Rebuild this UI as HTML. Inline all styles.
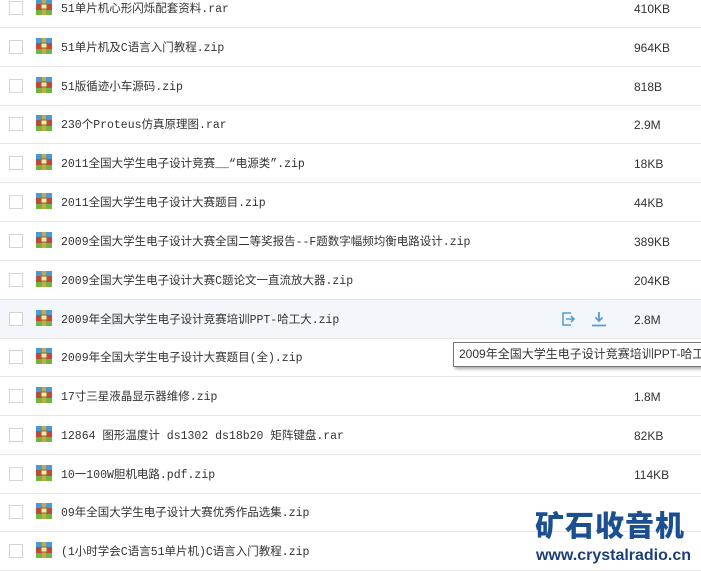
<!DOCTYPE html><html><head><meta charset="utf-8"><style>
body{margin:0;width:701px;height:570px;overflow:hidden;background:#fff;font-family:"Liberation Mono","Noto Sans CJK SC",monospace;font-size:11.5px;color:#333;position:relative}
.r{position:absolute;left:0;width:701px;height:38px;border-bottom:1px solid #e6e6e6}
.cb{position:absolute;left:9px;top:12px;width:12px;height:12px;border:1px solid #d4d4d4;background:#fff}
.ic{position:absolute;left:36px;top:10px;width:16px;height:16px}
.t{position:absolute;left:61px;top:11px;white-space:pre}
.s{position:absolute;left:634px;top:13px;font-family:"Liberation Sans","Noto Sans CJK SC",sans-serif;font-size:12px}
.h{background:#f3f7fb;border-top:1px solid #e0e7ef}
</style></head><body>
<svg width="0" height="0" style="position:absolute"><defs><g id="ic"><rect x="0" y="0" width="16" height="5" fill="#4a9ad8"/><rect x="0" y="5" width="16" height="6" fill="#c0483a"/><rect x="0" y="11" width="16" height="5" fill="#6fb53f"/><rect x="6" y="0" width="4" height="16" fill="#c9a84a"/><rect x="5" y="5" width="6" height="5" fill="#f3e6b0" stroke="#8a6d2b" stroke-width="1"/></g></defs></svg>
<div id="rows"></div>
<script>
const d=[["51单片机心形闪烁配套资料.rar","410KB"],["51单片机及C语言入门教程.zip","964KB"],["51版循迹小车源码.zip","818B"],["230个Proteus仿真原理图.rar","2.9M"],["2011全国大学生电子设计竞赛__“电源类”.zip","18KB"],["2011全国大学生电子设计大赛题目.zip","44KB"],["2009全国大学生电子设计大赛全国二等奖报告--F题数字幅频均衡电路设计.zip","389KB"],["2009全国大学生电子设计大赛C题论文一直流放大器.zip","204KB"],["2009年全国大学生电子设计竞赛培训PPT-哈工大.zip","2.8M"],["2009年全国大学生电子设计大赛题目(全).zip",""],["17寸三星液晶显示器维修.zip","1.8M"],["12864 图形温度计 ds1302 ds18b20 矩阵键盘.rar","82KB"],["10一100W胆机电路.pdf.zip","114KB"],["09年全国大学生电子设计大赛优秀作品选集.zip",""],["(1小时学会C语言51单片机)C语言入门教程.zip",""]];
let h="";d.forEach((x,i)=>{const top=Math.round(-11+i*38.8);h+=`<div class="r${i==8?' h':''}" style="top:${top}px"><div class="cb"></div><svg class="ic" viewBox="0 0 16 16"><use href="#ic"/></svg><div class="t">${x[0]}</div><div class="s">${x[1]}</div>${i==8?'<svg style="position:absolute;left:561px;top:11px" width="16" height="16" viewBox="0 0 16 16" fill="none" stroke="#5b9bd5" stroke-width="1.6"><path d="M10 2H2v12h8M5 8h8M10 5l3 3-3 3"/></svg><svg style="position:absolute;left:591px;top:11px" width="16" height="16" viewBox="0 0 16 16" fill="none" stroke="#5b9bd5" stroke-width="1.8"><path d="M8 1v9M4.5 6.5 8 10l3.5-3.5M1 14.5h14"/></svg>':''}</div>`});
document.getElementById("rows").innerHTML=h;
</script>
<div style="position:absolute;left:453px;top:342px;width:260px;height:23px;border:1px solid #767676;background:#fff;box-shadow:2px 2px 3px #aaa;font-family:'Liberation Sans','Noto Sans CJK SC',sans-serif;font-size:12px;line-height:23px;padding-left:5px;white-space:nowrap;color:#333">2009年全国大学生电子设计竞赛培训PPT-哈工大.zip</div>
<div style="position:absolute;left:535px;top:506px;font-family:'Noto Sans CJK SC',sans-serif;font-weight:900;font-size:29px;line-height:36px;color:#1b4f8f;letter-spacing:1px">矿石收音机</div>
<div style="position:absolute;left:536px;top:547px;font-family:'Liberation Sans',sans-serif;font-weight:bold;font-size:16px;color:#1b3f76">www.crystalradio.cn</div>
</body></html>
